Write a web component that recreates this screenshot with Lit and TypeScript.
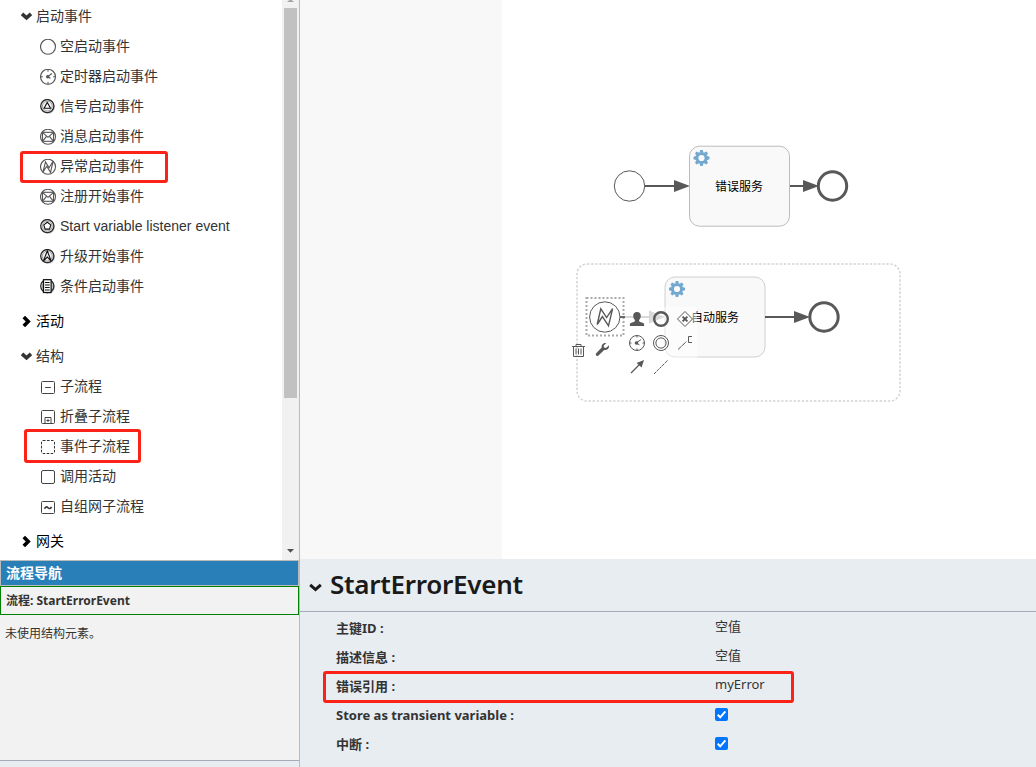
import { LitElement, html, css, svg, nothing } from "lit";
import { customElement, property } from "lit/decorators.js";

const ring = svg`<circle cx="8.5" cy="8.5" r="7.5" fill="none" stroke="#555" stroke-width="1.1"/>`;
const badge = svg`<circle cx="8.5" cy="8.8" r="7" fill="#bbb" opacity=".6"/><circle cx="7.8" cy="7.8" r="6.6" fill="#fff" stroke="#2a2a2a" stroke-width="1.3"/><circle cx="7.8" cy="7.8" r="5" fill="#eee" stroke="#888" stroke-width=".8"/>`;
const envelope = svg`${ring}<rect x="3" y="4" width="11" height="9" fill="none" stroke="#555" stroke-width="1.1"/><path d="M3 4 L8.5 9 L14 4 M3 13 L7.2 7.8 M14 13 L9.8 7.8" fill="none" stroke="#555" stroke-width="1.1"/>`;
const timer = svg`${ring}<path d="M8.5 1v2.4 M8.5 13.6v2.4 M1 8.5h2.4 M13.6 8.5h2.4" stroke="#555"/><path d="M12.4 5.2 L8 8.5 L11 10" fill="none" stroke="#555" stroke-width="1.1"/><circle cx="8.2" cy="8.5" r="1.7" fill="#555"/>`;
const box = svg`<rect x="2" y="2.5" width="13" height="12" rx="1" fill="none" stroke="#444"/>`;

const glyphs: Record<string, unknown> = {
  none: ring,
  timer,
  signal: svg`${badge}<path d="M7.8 4.2 L11 10 H4.6 Z" fill="#fff" stroke="#111" stroke-width="1.1"/>`,
  message: envelope,
  error: svg`${ring}<path d="M3.4 13.8 L6 3.6 L9.6 9.4 L13.6 3 L11 14 L7.2 8 Z" fill="none" stroke="#555" stroke-width="1.1"/>`,
  variable: svg`${badge}<path d="M7.8 4 L11.3 6.6 L10 10.8 H5.6 L4.3 6.6 Z" fill="#fff" stroke="#111" stroke-width="1.1"/>`,
  escalation: svg`${badge}<path d="M7.8 2.6 L11.6 12.6 L7.8 8.8 L4 12.6 Z" fill="#eee" stroke="#111" stroke-width="1.1"/>`,
  condition: svg`${badge}<rect x="4" y="1.4" width="7.6" height="12.8" fill="#fff" stroke="#111" stroke-width="1.2"/><path d="M5.4 4.2h4.8 M5.4 6.7h4.8 M5.4 9.2h4.8 M5.4 11.7h4.8" stroke="#111"/>`,
  sub: svg`${box}<path d="M5.6 8.5h5.8" stroke="#444"/>`,
  collapsed: svg`<rect x="2" y="1.5" width="13" height="13" rx="1" fill="none" stroke="#444"/><path d="M5.5 14.5v-6h6v6 M7 11.5h3 M8.5 10v3" fill="none" stroke="#444"/>`,
  eventsub: svg`<rect x="2" y="1.5" width="13" height="13" rx="1.5" fill="none" stroke="#333" stroke-dasharray="2.6 1.4"/>`,
  call: svg`<rect x="2" y="1.5" width="13" height="13" rx="1.5" fill="none" stroke="#444"/>`,
  adhoc: svg`${box}<path d="M5 9.8 C6 7.4 7.4 7.6 8.5 8.7 S11 10 12 7.8" fill="none" stroke="#333" stroke-width="1.6"/>`,
};
const squares = ["sub", "collapsed", "eventsub", "call", "adhoc"];

interface Entry { icon: string; text: string; mark?: string }
interface Group { name: string; open: boolean; items: Entry[] }

const groups: Group[] = [
  {
    name: "启动事件", open: true, items: [
      { icon: "none", text: "空启动事件" },
      { icon: "timer", text: "定时器启动事件" },
      { icon: "signal", text: "信号启动事件" },
      { icon: "message", text: "消息启动事件" },
      { icon: "error", text: "异常启动事件", mark: "wide" },
      { icon: "message", text: "注册开始事件" },
      { icon: "variable", text: "Start variable listener event" },
      { icon: "escalation", text: "升级开始事件" },
      { icon: "condition", text: "条件启动事件" },
    ],
  },
  { name: "活动", open: false, items: [] },
  {
    name: "结构", open: true, items: [
      { icon: "sub", text: "子流程" },
      { icon: "collapsed", text: "折叠子流程" },
      { icon: "eventsub", text: "事件子流程", mark: "narrow" },
      { icon: "call", text: "调用活动" },
      { icon: "adhoc", text: "自组网子流程" },
    ],
  },
  { name: "网关", open: false, items: [] },
];

@customElement("stencil-palette")
class StencilPalette extends LitElement {
  static styles = css`
    :host { display: flex; height: 560px; background: #fff; font: 14px/30px "Liberation Sans", "Noto Sans CJK SC", sans-serif; color: #333; }
    .list { flex: 1; padding-top: 1px; overflow: hidden; }
    .head { display: flex; align-items: center; height: 30px; padding-left: 20px; gap: 3px; }
    .group + .group .head { margin-top: 5px; }
    .closed { color: #000; }
    .chev { width: 13px; height: 13px; }
    .item { position: relative; display: flex; align-items: center; height: 30px; padding-left: 40px; gap: 3px; white-space: nowrap; }
    .icon { width: 17px; height: 17px; margin-top: 3px; }
    .mark { position: absolute; box-sizing: border-box; border: 3px solid #fb2318; border-radius: 3px; }
    .wide { left: 20px; top: 0; width: 148px; height: 32px; }
    .narrow { left: 24px; top: -2px; width: 117px; height: 34px; }
    .bar { width: 17px; background: #f1f1f1; display: flex; flex-direction: column; align-items: center; }
    .up { height: 8px; width: 17px; }
    .thumb { width: 13px; height: 390px; background: #c1c1c1; }
    .gap { flex: 1; }
    .down { width: 17px; height: 17px; }
  `;
  render() {
    return html`
      <div class="list">
        ${groups.map((g) => html`<div class="group">
          <div class="head ${g.open ? "" : "closed"}">
            <svg class="chev" viewBox="0 0 13 13">
              <path d=${g.open ? "M2 3.8 L6.5 7.8 L11 3.8" : "M3.8 2 L8.2 6.5 L3.8 11"} fill="none" stroke="currentColor" stroke-width="3.6"/>
            </svg>
            <span>${g.name}</span>
          </div>
          ${g.items.map((i) => html`<div class="item">
            <svg class="icon" viewBox=${squares.includes(i.icon) ? "0.5 0 17 17" : "0.5 0.7 17 17"}>${glyphs[i.icon]}</svg>
            <span>${i.text}</span>
            ${i.mark ? html`<i class="mark ${i.mark}"></i>` : nothing}
          </div>`)}
        </div>`)}
      </div>
      <div class="bar">
        <svg class="up" viewBox="0 0 17 8"><path d="M5 2h7L9.5 0h-2z" fill="#a3a3a3"/></svg>
        <div class="thumb"></div>
        <div class="gap"></div>
        <svg class="down" viewBox="0 0 17 17"><path d="M5 6h7L8.5 9.8z" fill="#505050"/></svg>
      </div>`;
  }
}

@customElement("process-navigator")
class ProcessNavigator extends LitElement {
  static styles = css`
    :host { display: flex; flex-direction: column; height: 207px; background: #f2f2f2; color: #333; font: 12px/18px "Noto Sans", "Noto Sans CJK SC", sans-serif; }
    .title { box-sizing: border-box; height: 26px; border: 1px solid #bbb; background: #2980b9; color: #fff; font-size: 14px; line-height: 24px; font-weight: 700; padding-left: 5px; }
    .current { box-sizing: border-box; height: 29px; border: 1px solid #008000; padding-left: 5px; font-weight: 700; line-height: 27px; }
    .empty { flex: 1; padding: 10px 5px; }
    .foot { height: 6px; background: #e8edf1; border-top: 1px solid #a4acb9; }
  `;
  render() {
    return html`
      <div class="title">流程导航</div>
      <div class="current">流程: StartErrorEvent</div>
      <div class="empty">未使用结构元素。</div>
      <div class="foot"></div>`;
  }
}

const teeth = [0, 45, 90, 135, 180, 225, 270, 315];
const gear = (x: number, y: number) => svg`<g transform="translate(${x} ${y})">
  <circle r="4.6" fill="none" stroke="#72a7d0" stroke-width="3"/>
  ${teeth.map((a) => svg`<path d="M-1.9 -5.5 L-1.2 -8 H1.2 L1.9 -5.5Z" fill="#72a7d0" transform="rotate(${a})"/>`)}
</g>`;
const task = (x: number, y: number, stroke: string) =>
  svg`<rect x=${x} y=${y} width="100" height="80" rx="10" fill="#f9f9f9" stroke=${stroke}/>`;

@customElement("process-canvas")
class ProcessCanvas extends LitElement {
  static styles = css`
    :host { display: block; height: 559px; background: linear-gradient(90deg, #f8f8f8 202px, #fff 202px); }
    .board { display: block; }
    .label { font: 12px "Noto Sans CJK SC", sans-serif; fill: #000; text-anchor: middle; }
  `;
  render() {
    return html`<svg class="board" width="736" height="559" viewBox="300 0 736 559">
      <g fill="none" stroke="#585858">
        <circle cx="629.5" cy="186" r="15.2" fill="#fff" stroke-width="1"/>
        <path d="M645 186 H676 M790 186 H806" stroke-width="2"/>
        <circle cx="832.5" cy="186" r="14.2" fill="#fff" stroke-width="3"/>
      </g>
      <path d="M674 180 L690 186 L674 192Z M803 180 L819 186 L803 192Z" fill="#585858"/>
      ${task(689.5, 146.2, "#bbb")}
      ${gear(701.5, 158)}
      <text class="label" x="739" y="191">错误服务</text>

      <rect x="577" y="264" width="323" height="137" rx="10" fill="none" stroke="#d3d3d3" stroke-width="1.5" stroke-dasharray="2.4 1.7"/>
      <path d="M620 317 H650" stroke="#bbb" stroke-width="2"/>
      <path d="M649 310.5 L665 317 L649 323.5Z" fill="#bbb"/>
      ${task(665, 277, "#d0d0d0")}
      ${gear(677, 289)}
      <path d="M765 317 H796" stroke="#585858" stroke-width="2"/>
      <path d="M794 311 L810 317 L794 323Z" fill="#585858"/>
      <circle cx="824" cy="317" r="14.2" fill="#fff" stroke="#585858" stroke-width="3"/>
      <text class="label" x="715" y="322">自动服务</text>
      <rect x="625" y="307" width="72" height="72" fill="#fff" opacity=".45"/>

      <rect x="586.5" y="298" width="37" height="37.5" fill="none" stroke="#aaa" stroke-width="2" stroke-dasharray="2 2"/>
      <circle cx="604.8" cy="317" r="15.2" fill="#fff" stroke="#585858"/>
      <path d="M597.2 324.5 L600.8 308.8 L606.6 317.6 L612.6 308.6 L608.5 325.8 L602.4 316.6Z" fill="none" stroke="#585858" stroke-width="1.4"/>
      <path d="M620 317h5" stroke="#555" stroke-width="1.6"/>

      <g fill="#585858" stroke="none">
        <path d="M637 312c2.7 0 4 1.7 3.8 4-.1 2-.9 3.2-1.7 4v1.2c1 1 4.5 1.2 5 2.6v2.2h-14.2v-2.2c.5-1.4 4-1.6 5-2.6v-1.2c-.8-.8-1.6-2-1.7-4-.2-2.3 1.1-4 3.8-4z"/>
        <path d="M609 345.2 l-3 2.7-1.9-.4-.5-1.8 2.8-2.6c-2.8-.5-5.3 1.7-4.7 4.5l-5.7 6c-.9 1.3.8 3.2 2.2 2.1l6-5.7c2.8.6 5.4-1.9 4.8-4.8z"/>
        <path d="M644 360 l-7.4 3 5 4.6z"/>
        <circle cx="636.5" cy="343" r="1.8"/>
      </g>
      <g fill="none" stroke="#585858">
        <circle cx="661" cy="319" r="6.8" stroke-width="2.4"/>
        <path d="M685 311.5 L692.5 319 L685 326.5 L677.5 319Z"/>
        <path d="M682.6 316.6l4.8 4.8m0-4.8l-4.8 4.8" stroke-width="2"/>
        <circle cx="637" cy="343" r="7.5"/>
        <path d="M637 335.5v2m0 11v2m-7.5-7.5h2m11 0h2M641 339.6l-5 3.4 3.4 1.8"/>
        <circle cx="661" cy="343" r="7.5"/><circle cx="661" cy="343" r="5.1"/>
        <path d="M678 349.5l8.5-8" stroke-dasharray="5 .6"/>
        <path d="M692 336.5h-3.5v6h3.5"/>
        <path d="M631 373l8.5-8.5" stroke-width="1.3"/>
        <path d="M654 374l14-14" stroke-dasharray="3 .8"/>
        <path d="M572 346.5h13M576 346v-1.5h5v1.5M573.5 346.5v10h10v-10M576 348.5v6m2.5-6v6m2.5-6v6"/>
      </g>
    </svg>`;
  }
}

@customElement("property-panel")
class PropertyPanel extends LitElement {
  @property() heading = "StartErrorEvent";
  static styles = css`
    :host { display: block; flex: 1; background: #e8edf1; color: #333; font: 13px/29px "Noto Sans", "Noto Sans CJK SC", sans-serif; }
    .head { box-sizing: border-box; height: 53px; border-bottom: 1px solid #a4acb9; display: flex; align-items: center; gap: 8px; padding-left: 9px; color: #1a1a1a; font-size: 26px; font-weight: 600; }
    .chev { width: 13px; height: 13px; margin-top: 5px; }
    .name { line-height: 48px; margin-top: -2px; letter-spacing: -0.27px; }
    .rows { padding-top: 2px; }
    .row { position: relative; display: grid; grid-template-columns: 379px 1fr; height: 29px; padding-left: 36px; }
    .key { font-weight: 700; line-height: 29px; }
    .val { line-height: 25px; }
    .tick { display: block; width: 13px; height: 13px; margin-top: 7px; }
    .mark { position: absolute; left: 23px; top: -1px; width: 471px; height: 32px; box-sizing: border-box; border: 3px solid #fb2318; border-radius: 3px; }
  `;
  row(key: string, value: string | null, marked = false) {
    return html`<div class="row">
      <span class="key">${key} :</span>
      ${value === null
        ? html`<svg class="tick" viewBox="0 0 13 13"><rect width="13" height="13" rx="2" fill="#0075ff"/><path d="M2.7 6.8 L5.2 9.3 L10.4 3.3" fill="none" stroke="#fff" stroke-width="2"/></svg>`
        : html`<span class="val">${value}</span>`}
      ${marked ? html`<i class="mark"></i>` : nothing}
    </div>`;
  }
  render() {
    return html`
      <div class="head">
        <svg class="chev" viewBox="0 0 13 13"><path d="M1.2 3.8 L6.5 8.6 L11.8 3.8" fill="none" stroke="#1a1a1a" stroke-width="3"/></svg>
        <span class="name">${this.heading}</span>
      </div>
      <div class="rows">
        ${this.row("主键ID", "空值")}
        ${this.row("描述信息", "空值")}
        ${this.row("错误引用", "myError", true)}
        ${this.row("Store as transient variable", null)}
        ${this.row("中断", null)}
      </div>`;
  }
}

@customElement("app-root")
class AppRoot extends LitElement {
  static styles = css`
    :host { display: grid; grid-template-columns: 300px 736px; height: 767px; width: 1036px; overflow: hidden; }
    .side { box-sizing: border-box; border-right: 1px solid #bbb; }
    .main { display: flex; flex-direction: column; }
  `;
  render() {
    return html`
      <div class="side"><stencil-palette></stencil-palette><process-navigator></process-navigator></div>
      <div class="main"><process-canvas></process-canvas><property-panel></property-panel></div>`;
  }
}
